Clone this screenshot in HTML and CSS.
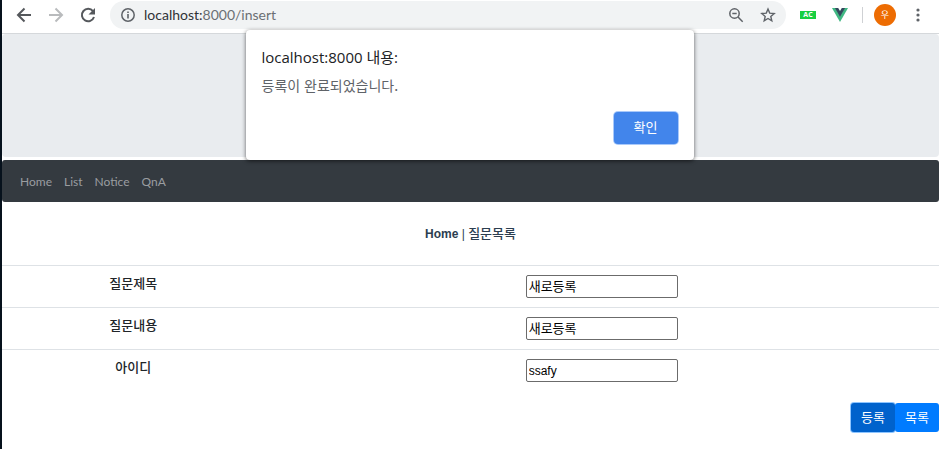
FILE: index.html
```html
<!DOCTYPE html>
<html lang="ko">
<head>
<meta charset="utf-8">
<title>질문목록</title>
<link rel="stylesheet" href="styles.css">
</head>
<body>
<header class="toolbar">
  <button class="tool" aria-label="Back"><svg width="16" height="16" viewBox="0 0 16 16" fill="none" stroke="#55585c" stroke-width="2"><path d="M15 8H2.500M8.500 1.500L2 8l6.500 6.500"/></svg></button>
  <button class="tool" aria-label="Forward"><svg width="16" height="16" viewBox="0 0 16 16" fill="none" stroke="#b9bbbd" stroke-width="2"><path d="M1 8h12.500M7.500 1.500L14 8l-6.500 6.500"/></svg></button>
  <button class="tool" aria-label="Reload"><svg width="16" height="16" viewBox="0 0 16 16"><path d="M13 4.200A6.200 6.200 0 1 0 14 10" fill="none" stroke="#55585c" stroke-width="2"/><path d="M15 1v6.500H8.500z" fill="#55585c"/></svg></button>
  <div class="address">
    <svg width="16" height="16" viewBox="0 0 16 16"><circle cx="8" cy="8" r="6.200" fill="none" stroke="#5f6368" stroke-width="1.500"/><path d="M7.200 7h1.600v4.500H7.200zM7.200 4.400h1.600V6H7.200z" fill="#5f6368"/></svg>
    <span class="url"><span class="host">localhost:</span>8000/insert</span>
    <button class="tool zoom" aria-label="Zoom"><svg width="16" height="16" viewBox="0 0 16 16" fill="none" stroke="#5f6368" stroke-width="1.500"><circle cx="6.500" cy="6.500" r="4.700"/><path d="M10 10l4.700 4.700M4.300 6.500h4.400"/></svg></button>
    <button class="tool" aria-label="Bookmark"><svg width="16" height="16" viewBox="0 0 16 16" fill="none" stroke="#5f6368" stroke-width="1.400"><path d="M8 2l1.700 4.100 4.500.4-3.400 2.900 1 4.400L8 11.500l-3.800 2.300 1-4.400-3.400-2.900 4.500-.4z"/></svg></button>
  </div>
  <span class="ac">AC</span>
  <svg class="vue" width="16" height="14" viewBox="0 0 16 14"><path d="M0 0h16L8 14z" fill="#41b883"/><path d="M3 0h10L8 8.800z" fill="#34495e"/><path d="M6.200 0h3.600L8 3z" fill="#fff"/></svg>
  <span class="divider"></span>
  <button class="avatar">우</button>
  <button class="tool menu" aria-label="Menu"><svg width="4" height="14" viewBox="0 0 4 14" fill="#5f6368"><circle cx="2" cy="2" r="1.600"/><circle cx="2" cy="7" r="1.600"/><circle cx="2" cy="12" r="1.600"/></svg></button>
</header>
<main>
  <div class="banner"></div>
  <nav class="navbar">
    <a href="#">Home</a><a href="#">List</a><a href="#">Notice</a><a href="#">QnA</a>
  </nav>
  <div class="crumbs"><a href="#">Home</a> | <a href="#">질문목록</a></div>
  <form>
    <table>
      <tr><th><label for="subject">질문제목</label></th><td><input id="subject" type="text" value="새로등록"></td></tr>
      <tr><th><label for="content">질문내용</label></th><td><input id="content" type="text" value="새로등록"></td></tr>
      <tr><th><label for="userid">아이디</label></th><td><input id="userid" class="latin" type="text" value="ssafy"></td></tr>
    </table>
    <div class="actions">
      <button type="button" class="btn active">등록</button><button type="button" class="btn">목록</button>
    </div>
  </form>
</main>
<div class="dialog" role="alertdialog" aria-labelledby="dialog-title">
  <h1 id="dialog-title">localhost:8000 내용:</h1>
  <p>등록이 완료되었습니다.</p>
  <button class="confirm">확인</button>
</div>
</body>
</html>
```
FILE: styles.css
```css
* {
  box-sizing: border-box;
}

body {
  margin: 0;
  min-height: 100vh;
  border-left: 2px solid #06111c;
  background: #fff;
  color: #212529;
  font: 13px/20px "Noto Sans CJK KR", sans-serif;
}

button {
  padding: 0;
  border: 0;
  background: none;
  font: inherit;
}

svg {
  display: block;
}

a {
  color: inherit;
  text-decoration: none;
}

.toolbar {
  display: flex;
  align-items: center;
  height: 34px;
  padding: 0 16px 4px 14px;
  border-bottom: 1px solid #d5d8db;
}

.tool {
  flex: none;
  margin-right: 16px;
}

.address {
  display: flex;
  flex: 1;
  align-items: center;
  height: 28px;
  margin: 0 14px 0 -2px;
  padding: 0 10px;
  border-radius: 14px;
  background: #f1f3f4;
}

.url {
  flex: 1;
  margin-left: 8px;
  color: #6b6f73;
  font: 14px/20px Lato, sans-serif;
}

.host {
  color: #303236;
}

.address .tool {
  margin-right: 0;
}

.address .zoom {
  margin-right: 16px;
}

.ac {
  width: 16px;
  height: 8px;
  background: #18cf42;
  color: #fff;
  font: bold 7px/8px "Open Sans", sans-serif;
  text-align: center;
}

.vue {
  margin: 0 14px 0 16px;
}

.divider {
  width: 1px;
  height: 16px;
  margin-right: 11px;
  background: #cfd1d4;
}

.avatar {
  width: 22px;
  height: 22px;
  margin-right: 20px;
  border-radius: 50%;
  background: #ed6c02;
  color: #fff;
  font-size: 9px;
  line-height: 22px;
}

.menu {
  margin-right: 3px;
}

.banner {
  height: 123px;
  margin-bottom: 3px;
  border-radius: 4px;
  background: #e9ecef;
}

.navbar {
  display: flex;
  gap: 12px;
  padding: 12px 18px 10px;
  border-radius: 3px;
  background: #343a40;
  color: #9a9da0;
  font: 12px/20px Lato, sans-serif;
}

.crumbs {
  padding: 22px 0 21px;
  color: #2c3e50;
  font: 12px/20px "Liberation Sans", "Noto Sans CJK KR", sans-serif;
  text-align: center;
}

.crumbs a {
  font-weight: bold;
}

.crumbs a:last-child {
  font-size: 13px;
  font-weight: 500;
}

table {
  width: 100%;
  border-collapse: collapse;
}

th,
td {
  padding: 9px;
  border-top: 1px solid #dee2e6;
  text-align: center;
  vertical-align: top;
}

th {
  width: 28%;
  padding-top: 7px;
  font-weight: 500;
}

input {
  display: block;
  width: 152px;
  height: 23px;
  margin: 0 auto;
  padding: 0 2px 3px;
  border: 1px solid #6b6b6b;
  border-radius: 2px;
  background: #fff;
  color: #000;
  font: 13px/18px "Noto Sans CJK KR", sans-serif;
}

.latin {
  padding-bottom: 0;
  font: 12px/20px "Liberation Sans", sans-serif;
}

.actions {
  display: flex;
  justify-content: flex-end;
  padding-top: 12px;
}

.btn {
  width: 44px;
  height: 29px;
  padding-bottom: 2px;
  border-radius: 3px;
  background: #007bff;
  color: #fff;
}

.active {
  background: #0062cc;
  box-shadow: 0 0 0 1px #8ec5ff;
}

.dialog {
  position: absolute;
  top: 30px;
  left: 50%;
  width: 448px;
  padding: 17px 16px 16px;
  border-radius: 4px;
  background: #fff;
  box-shadow: 0 1px 4px rgba(0, 0, 0, 0.6);
  transform: translateX(-50%);
}

h1 {
  margin: 0;
  color: #202124;
  font: 15px/20px "Open Sans", "Noto Sans CJK KR", sans-serif;
}

p {
  margin: 8px 0 17px;
  color: #5f6368;
  font-size: 14px;
}

.confirm {
  display: block;
  width: 64px;
  height: 32px;
  margin-left: auto;
  padding-bottom: 2px;
  border-radius: 4px;
  background: #4285eb;
  box-shadow: 0 0 0 1px #a9c9fa;
  color: #fff;
}
```
